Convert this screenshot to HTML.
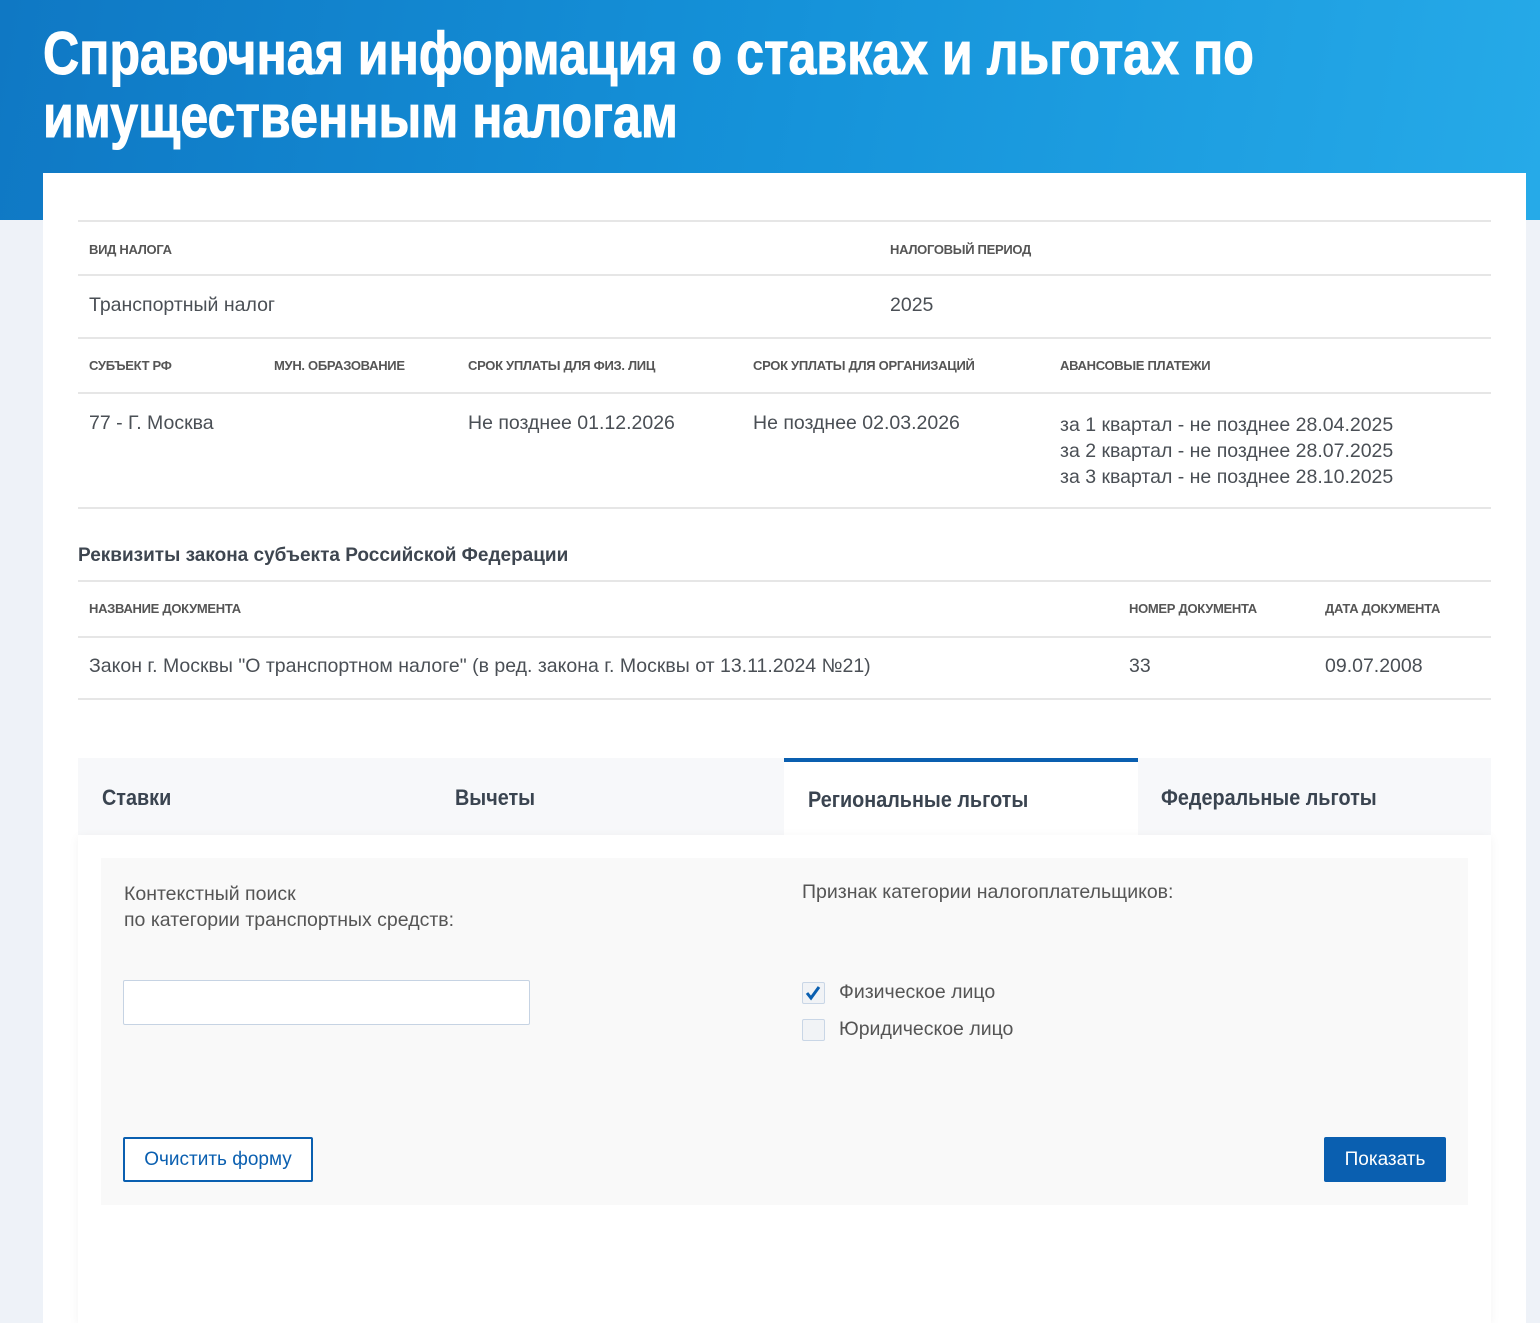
<!DOCTYPE html>
<html><head><meta charset="utf-8"><style>
*{margin:0;padding:0;box-sizing:border-box}
body{width:1540px;height:1323px;overflow:hidden;background:#eef2f8;font-family:"Liberation Sans","Noto Sans CJK SC",sans-serif;color:#4a4f55;position:relative}
.hdr{position:absolute;left:0;top:0;width:1540px;height:220px;background:linear-gradient(100deg,#0f78c4 0%,#1592d9 50%,#26aae8 100%)}
.title{position:absolute;left:43px;top:22px;color:#fff;font-weight:bold;font-size:60px;line-height:63px;transform:scaleX(0.835);transform-origin:0 0;white-space:nowrap;-webkit-text-stroke:1px #fff}
.card{position:absolute;left:43px;top:173px;width:1483px;height:1150px;background:#fff}
.a{position:absolute;white-space:nowrap}
.ln{position:absolute;left:78px;width:1413px;height:2px;background:#e6e6e6}
.h{font-size:13px;font-weight:bold;color:#555;letter-spacing:-0.3px}
.v{font-size:19.5px;color:#4a4f55}
.tabs{position:absolute;left:78px;top:758px;width:1413px;height:77px;background:#f7f8fa}
.tab{position:absolute;top:0;height:77px;font-weight:bold;font-size:22px;color:#3a4450;line-height:80px}
.tab span{display:inline-block;transform:scaleX(0.9);transform-origin:0 0}
.act{left:706px;width:354px;background:#fff;border-top:4px solid #0a5fb0;line-height:76px;padding-left:24px}
.panel{position:absolute;left:78px;top:835px;width:1413px;height:488px;background:#fff;box-shadow:0 2px 10px rgba(0,0,0,.05)}
.inner{position:absolute;left:101px;top:858px;width:1367px;height:347px;background:#f9f9f9}
.cb{position:absolute;left:802px;width:23px;height:22px;border:1px solid #c9d6e6;background:#f1f3f6;border-radius:2px}
</style></head><body>
<div class="hdr"></div>
<div class="title">Справочная информация о ставках и льготах по<br>имущественным налогам</div>
<div class="card"></div>

<div class="ln" style="top:220px"></div>
<div class="a h" style="left:89px;top:242px">ВИД НАЛОГА</div>
<div class="a h" style="left:890px;top:242px">НАЛОГОВЫЙ ПЕРИОД</div>
<div class="ln" style="top:274px"></div>
<div class="a v" style="left:89px;top:294px">Транспортный налог</div>
<div class="a v" style="left:890px;top:294px">2025</div>
<div class="ln" style="top:337px"></div>
<div class="a h" style="left:89px;top:358px">СУБЪЕКТ РФ</div>
<div class="a h" style="left:274px;top:358px">МУН. ОБРАЗОВАНИЕ</div>
<div class="a h" style="left:468px;top:358px">СРОК УПЛАТЫ ДЛЯ ФИЗ. ЛИЦ</div>
<div class="a h" style="left:753px;top:358px">СРОК УПЛАТЫ ДЛЯ ОРГАНИЗАЦИЙ</div>
<div class="a h" style="left:1060px;top:358px">АВАНСОВЫЕ ПЛАТЕЖИ</div>
<div class="ln" style="top:392px"></div>
<div class="a v" style="left:89px;top:412px">77 - Г. Москва</div>
<div class="a v" style="left:468px;top:412px">Не позднее 01.12.2026</div>
<div class="a v" style="left:753px;top:412px">Не позднее 02.03.2026</div>
<div class="a v" style="left:1060px;top:412px;line-height:26px">за 1 квартал - не позднее 28.04.2025<br>за 2 квартал - не позднее 28.07.2025<br>за 3 квартал - не позднее 28.10.2025</div>
<div class="ln" style="top:507px"></div>
<div class="a" style="left:78px;top:545px;font-size:19px;font-weight:bold;color:#3e4650">Реквизиты закона субъекта Российской Федерации</div>
<div class="ln" style="top:580px"></div>
<div class="a h" style="left:89px;top:601px">НАЗВАНИЕ ДОКУМЕНТА</div>
<div class="a h" style="left:1129px;top:601px">НОМЕР ДОКУМЕНТА</div>
<div class="a h" style="left:1325px;top:601px">ДАТА ДОКУМЕНТА</div>
<div class="ln" style="top:636px"></div>
<div class="a v" style="left:89px;top:655px">Закон г. Москвы "О транспортном налоге" (в ред. закона г. Москвы от 13.11.2024 №21)</div>
<div class="a v" style="left:1129px;top:655px">33</div>
<div class="a v" style="left:1325px;top:655px">09.07.2008</div>
<div class="ln" style="top:698px"></div>

<div class="tabs">
<div class="tab" style="left:24px"><span>Ставки</span></div>
<div class="tab" style="left:377px"><span>Вычеты</span></div>
<div class="tab act"><span>Региональные льготы</span></div>
<div class="tab" style="left:1083px"><span>Федеральные льготы</span></div>
</div>
<div class="panel"></div>
<div class="inner"></div>
<div class="a v" style="left:124px;top:881px;line-height:26px;color:#555">Контекстный поиск<br>по категории транспортных средств:</div>
<div class="a v" style="left:802px;top:881px;color:#555">Признак категории налогоплательщиков:</div>
<div class="a" style="left:123px;top:980px;width:407px;height:45px;border:1px solid #c6d3e3;background:#fff;border-radius:2px"></div>
<div class="cb" style="top:982px"><svg width="21" height="20" viewBox="0 0 21 20"><path d="M4 10l4 5 8-11" stroke="#0a5fb0" stroke-width="3" fill="none"/></svg></div>
<div class="a v" style="left:839px;top:981px;color:#555">Физическое лицо</div>
<div class="cb" style="top:1019px"></div>
<div class="a v" style="left:839px;top:1018px;color:#555">Юридическое лицо</div>
<div class="a" style="left:123px;top:1137px;width:190px;height:45px;border:2px solid #0a5fb0;border-radius:2px;background:#fff;color:#0a5fb0;font-size:19px;text-align:center;line-height:41px">Очистить форму</div>
<div class="a" style="left:1324px;top:1137px;width:122px;height:45px;background:#0a5fb0;border-radius:2px;color:#fff;font-size:19px;text-align:center;line-height:45px">Показать</div>
</body></html>
